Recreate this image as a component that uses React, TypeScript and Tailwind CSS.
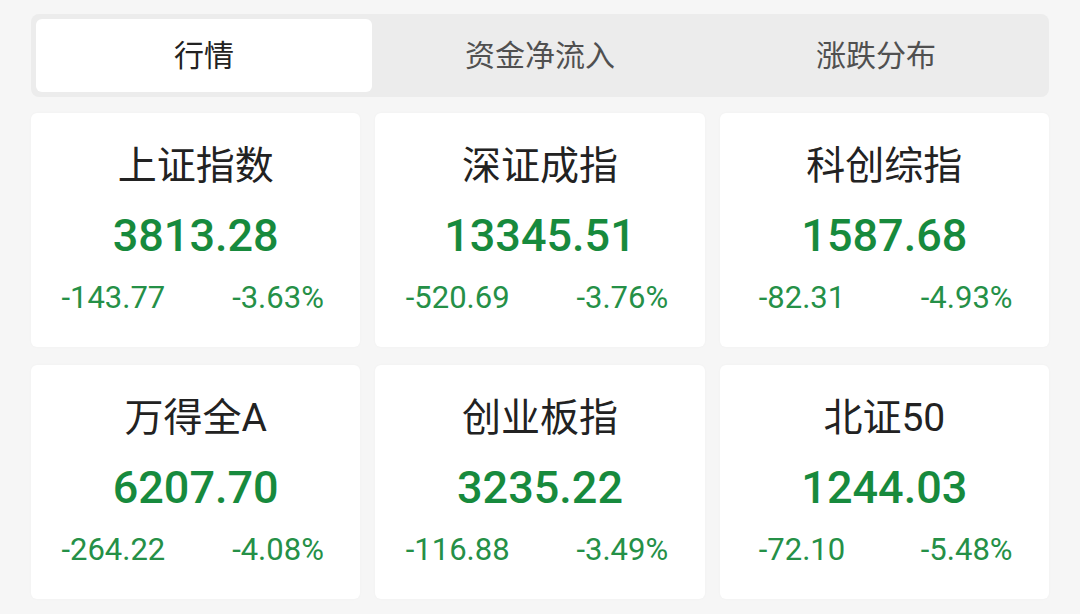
import React, { useState } from "react";

interface IndexQuote {
  name: string;
  price: string;
  change: string;
  pct: string;
}

const TABS = ["行情", "资金净流入", "涨跌分布"];

const QUOTES: IndexQuote[] = [
  { name: "上证指数", price: "3813.28", change: "-143.77", pct: "-3.63%" },
  { name: "深证成指", price: "13345.51", change: "-520.69", pct: "-3.76%" },
  { name: "科创综指", price: "1587.68", change: "-82.31", pct: "-4.93%" },
  { name: "万得全A", price: "6207.70", change: "-264.22", pct: "-4.08%" },
  { name: "创业板指", price: "3235.22", change: "-116.88", pct: "-3.49%" },
  { name: "北证50", price: "1244.03", change: "-72.10", pct: "-5.48%" },
];

const FONT = "font-['Roboto','Noto_Sans_CJK_SC',sans-serif]";

export default function App() {
  const [active, setActive] = useState(0);

  return (
    <div className={`w-[1080px] h-[614px] bg-[#f6f6f6] px-[31px] pt-[14px] ${FONT}`}>
      {/* Tabs */}
      <div className="h-[83px] bg-[#ececec] rounded-[8px] p-[5px] grid grid-cols-3">
        {TABS.map((tab, i) => (
          <button
            key={tab}
            onClick={() => setActive(i)}
            className={`rounded-[6px] text-[30px] leading-none ${
              active === i ? "bg-white text-[#222222]" : "text-[#505050]"
            }`}
          >
            {tab}
          </button>
        ))}
      </div>

      {/* Index cards */}
      <div className="mt-[16px] grid grid-cols-3 gap-x-[15px] gap-y-[18px]">
        {QUOTES.map(q => (
          <div
            key={q.name}
            className="h-[234px] bg-white rounded-[6px] shadow-[0_0_3px_rgba(0,0,0,0.03)] flex flex-col items-center"
          >
            <div className="mt-[28px] h-[50px] leading-[50px] text-[39px] text-[#222222]">
              {q.name}
            </div>
            <div className="mt-[17px] h-[56px] leading-[56px] text-[45px] font-medium text-[#178a3d]">
              {q.price}
            </div>
            <div className="mt-[14px] w-full grid grid-cols-2 text-[31px] leading-[40px] text-[#259047]">
              <span className="text-center">{q.change}</span>
              <span className="text-center">{q.pct}</span>
            </div>
          </div>
        ))}
      </div>
    </div>
  );
}
